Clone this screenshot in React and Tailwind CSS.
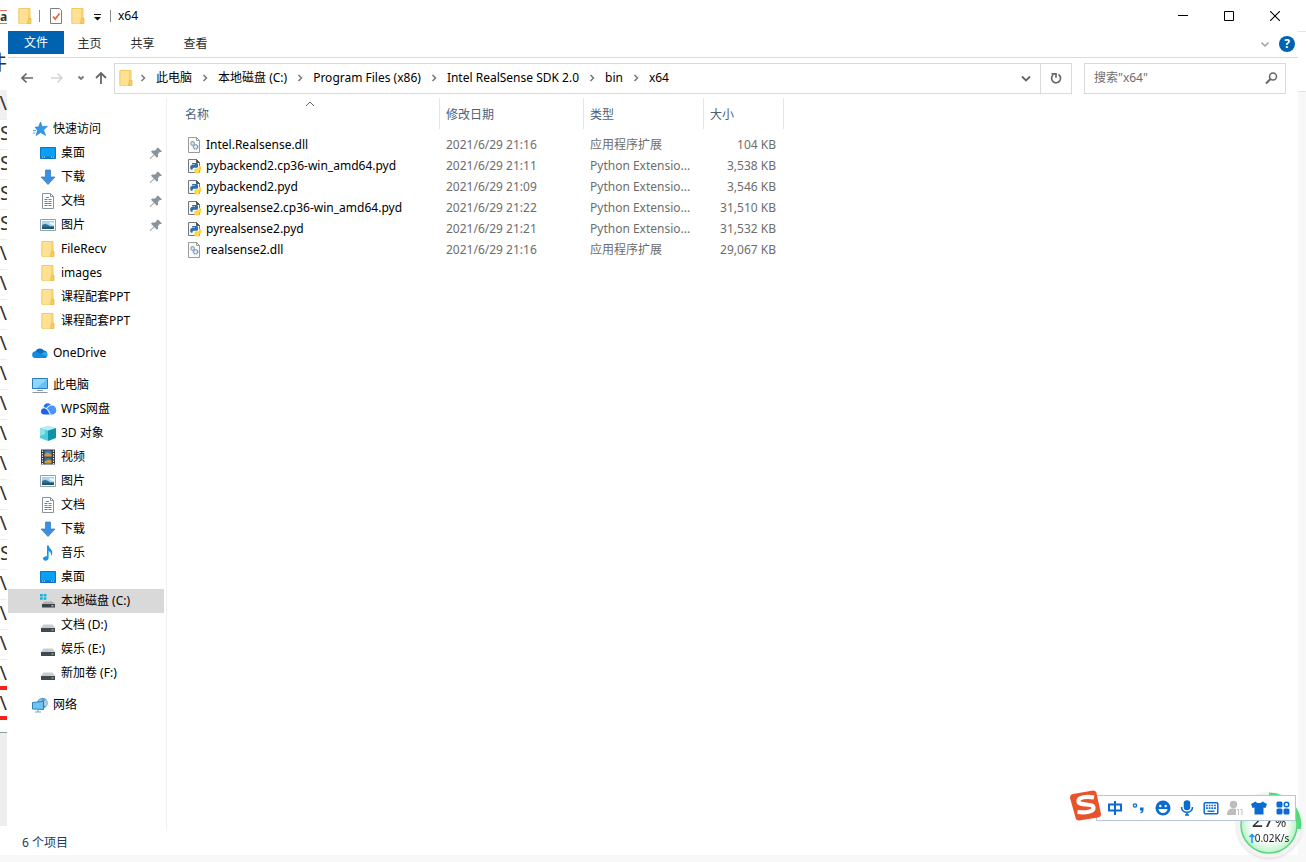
import React from "react";

const QUICK = [
  { icon: "desktop", label: "桌面", pinned: true },
  { icon: "download", label: "下载", pinned: true },
  { icon: "doc", label: "文档", pinned: true },
  { icon: "picture", label: "图片", pinned: true },
  { icon: "folder", label: "FileRecv" },
  { icon: "folder", label: "images" },
  { icon: "folder", label: "课程配套PPT" },
  { icon: "folder", label: "课程配套PPT" },
];

const THIS_PC = [
  { icon: "wps", label: "WPS网盘" },
  { icon: "cube", label: "3D 对象" },
  { icon: "video", label: "视频" },
  { icon: "picture", label: "图片" },
  { icon: "doc", label: "文档" },
  { icon: "download", label: "下载" },
  { icon: "music", label: "音乐" },
  { icon: "desktop", label: "桌面" },
  { icon: "sysdrive", label: "本地磁盘 (C:)", selected: true },
  { icon: "drive", label: "文档 (D:)" },
  { icon: "drive", label: "娱乐 (E:)" },
  { icon: "drive", label: "新加卷 (F:)" },
];

const CRUMBS = ["此电脑", "本地磁盘 (C:)", "Program Files (x86)", "Intel RealSense SDK 2.0", "bin", "x64"];

const PYD = "Python Extensio...";
const DLL = "应用程序扩展";

const FILES = [
  { name: "Intel.Realsense.dll", date: "2021/6/29 21:16", type: DLL, size: "104 KB" },
  { name: "pybackend2.cp36-win_amd64.pyd", date: "2021/6/29 21:11", type: PYD, size: "3,538 KB" },
  { name: "pybackend2.pyd", date: "2021/6/29 21:09", type: PYD, size: "3,546 KB" },
  { name: "pyrealsense2.cp36-win_amd64.pyd", date: "2021/6/29 21:22", type: PYD, size: "31,510 KB" },
  { name: "pyrealsense2.pyd", date: "2021/6/29 21:21", type: PYD, size: "31,532 KB" },
  { name: "realsense2.dll", date: "2021/6/29 21:16", type: DLL, size: "29,067 KB" },
];

// Paths listed in the window behind; only the last few pixels show.
const BEHIND = [":\\", "S", "S", "S", "S", ":\\", ":\\", ":\\", ":\\", ":\\", ":\\", ":\\", ":\\", ":\\", ":\\", "S", ":\\", ":\\", ":\\", ":\\", ":\\"];

const GLYPHS = {
  folder: (
    <>
      <path d="M2 15.500V.5h11v11" fill="#ffe08a" stroke="#efc75e" />
      <path d="M2 15.500V.5h9.500v15z" fill="#ffe191" stroke="#efc55a" strokeWidth=".6" />
      <path d="M11.500 10.500h2.500v5h-3.500z" fill="#f7cf62" stroke="#e5b847" strokeWidth=".8" />
    </>
  ),
  star: (
    <>
      <path d="M8.500 1l1.700 4.700 5.300-.4-4 3.600 2.100 5.600-4.900-3-4.600 3.100 1.500-5.400L3 6.300l3.700-.5z" fill="#2f9be8" stroke="#1479c9" strokeWidth=".6" />
      <path d="M1 9.500h3M1 12h2" stroke="#4aa9ee" strokeWidth="1" />
    </>
  ),
  desktop: (
    <>
      <path d="M.5 2.500h15v11H.5z" fill="#0aa0f6" stroke="#0d76c2" />
      <path d="M1 11h14v2H1z" fill="#0b83d6" />
      <path d="M2 12h1m1 0h1m6 0h1m1 0h1" stroke="#d7f0ff" strokeWidth=".9" />
    </>
  ),
  download: <path d="M5.500 1h5v7H15l-7 7.500L1 8h4.500z" fill="#3e8fe0" stroke="#2c76c4" strokeWidth=".7" />,
  doc: (
    <>
      <path d="M2.500.5h8l3 3v12h-11z" fill="#fff" stroke="#8a949c" />
      <path d="M10.500.5v3h3" fill="none" stroke="#8a949c" />
      <path d="M6 4.500h3M4.500 6.500h3m1 0h3M4.500 8.500h3m1 0h3M4.500 10.500h7M4.500 12.500h3m1 0h3" stroke="#2f8fd0" strokeWidth="1.200" />
    </>
  ),
  picture: (
    <>
      <path d="M.5 2.500h15v11H.5z" fill="#fff" stroke="#98a1a8" />
      <path d="M2 4h12v8H2z" fill="#a9d5f3" />
      <path d="M2 8c3-2 5-1 7 .500s4 .5 5 .5v3H2z" fill="#33708f" />
      <path d="M2 10h12v2H2z" fill="#1d5675" />
      <path d="M9 6c2-1 4 0 5 0v2c-2 0-3-.5-5-2z" fill="#eef8fe" />
    </>
  ),
  cloud: (
    <>
      <path d="M4 12.800A3.300 3.300 0 0 1 3.500 6.300a4.800 4.800 0 0 1 8.300-.8A3.800 3.800 0 0 1 13 12.800z" fill="#0f6cbd" />
      <path d="M3.500 13a3.300 3.300 0 0 1-.1-6.600c1.600 0 2.500.6 4 1.600L14.800 12a2 2 0 0 1-1.800 1z" fill="#168ade" />
      <path d="M9 9l3.500-2.200a3.200 3.200 0 0 1 2.600 4.800z" fill="#2ba6f2" />
    </>
  ),
  pc: (
    <>
      <path d="M.5 1.500h15v10H.5z" fill="#66c0f5" stroke="#2a7db6" />
      <path d="M1 2h14L5 11H1z" fill="#8fd6fb" />
      <path d="M5 13.500h6" stroke="#8c989f" />
      <path d="M.5 15.500h15" stroke="#8c989f" />
    </>
  ),
  wps: (
    <>
      <path d="M8 6.500a4 4 0 0 1 4-2 4.600 4.600 0 0 1 1 9H10L6.500 8z" fill="#4a95ff" />
      <path d="M3.500 6C4 2 8.500 1 11 4 8.500 4 7.500 5.500 6.500 7z" fill="#2473f0" />
      <path d="M3.500 13.500a3.200 3.200 0 0 1 .3-6.300c2 0 3 1.200 3.600 2.300l2.400 4z" fill="#1f63df" />
      <path d="M6.500 7.300c1.500 1 2.500 3 3.800 6" fill="none" stroke="#fff" strokeWidth=".9" />
    </>
  ),
  cube: (
    <>
      <path d="M0 3l8-2.500L16 3 8 5.500z" fill="#b7eef5" />
      <path d="M0 3l8 2.500V16L0 13z" fill="#4fcbdc" />
      <path d="M16 3L8 5.500V16l8-3z" fill="#0e93a8" />
      <path d="M0 3l5 1.500V9L0 11z" fill="#89e2ec" />
    </>
  ),
  video: (
    <>
      <path d="M1 .5h14v15H1z" fill="#33383d" />
      <path d="M4.500 1.500h7v6h-7z" fill="#477cb8" />
      <path d="M4.500 8.500h7v6h-7z" fill="#3b6ca6" />
      <path d="M4.500 5.500l3-2 4 2v2h-7zM4.500 12.500l4-2 3 1v3h-7z" fill="#cf9e39" />
      <path d="M2.500 1.500v14M13.500 1.500v14" stroke="#fff" strokeWidth="1.200" strokeDasharray="1.200 1.300" />
    </>
  ),
  music: (
    <path d="M7 .5h1.600c.5 3 4 4 3.700 7.500-.1 1.500-.8 2.500-1.300 3 .6-3-.7-4.300-2.400-5V13c0 1.800-1.500 2.700-3 2.700S3 14.700 3 13.500 4.300 11 7 11.200z" fill="#1695e0" />
  ),
  drive: (
    <>
      <path d="M3.500 7.500h9l2.500 3.500H1z" fill="#c9cccf" />
      <path d="M1 11h14v4H1z" fill="#41484e" />
      <path d="M11.500 13h2" stroke="#9be8a4" />
    </>
  ),
  sysdrive: (
    <>
      <path d="M0 1h2.800v2.500H0zM3.600 1h2.800v2.500H3.600zM0 4.300h2.800v2.500H0zM3.600 4.300h2.800v2.500H3.600z" fill="#17b4da" />
      <path d="M4.500 8.500h8L15 11H2z" fill="#aeb2b5" />
      <path d="M2 11h13v3.500H2z" fill="#3d454b" />
      <path d="M11.500 12.800h2" stroke="#d9f5dc" />
    </>
  ),
  network: (
    <>
      <circle cx="10.500" cy="6" r="5.300" fill="#5c9fcb" />
      <path d="M6.500 3.500c3-2.500 3 1 5 1s1-3 3-1 1 5-1 6z" fill="#a9cbe0" />
      <path d="M.5 5.500l11-1.200v8.200l-11-.5z" fill="#6cc3f4" stroke="#2374ae" strokeWidth=".9" />
      <path d="M3 15h6M6 12.500V15" stroke="#77a9ca" strokeWidth="1.200" />
    </>
  ),
  dll: (
    <>
      <path d="M1.500.5h8l3 3v12h-11z" fill="#fbfbfb" stroke="#9a9a9a" />
      <path d="M9.500.5v3h3" fill="none" stroke="#9a9a9a" />
      <circle cx="5.600" cy="6.500" r="1.800" fill="#e3e9f0" stroke="#90a4bb" strokeWidth="1.200" />
      <circle cx="8.600" cy="9.800" r="2.200" fill="#e3e9f0" stroke="#8096b0" strokeWidth="1.400" strokeDasharray="1.400 .4" />
    </>
  ),
  pyd: (
    <>
      <path d="M1.500 1.500h8l3 3v10h-11z" fill="#f7f7f7" stroke="#777" />
      <path d="M9.500 1.500v3h3z" fill="#555" stroke="#555" />
      <path d="M6 5h3.500c1 0 1.500.6 1.500 1.500v2c0 .8-.6 1.300-1.500 1.300H7c-1 0-1.500.6-1.500 1.500v.5H5c-1.300 0-1.800-1-1.800-2.400S3.700 7 5 7h3v-.4H5V6c0-.6.3-1 1-1z" fill="#2f6ea8" />
      <path d="M12 8h.700c1.300 0 1.800 1 1.800 2.400S14 12.800 12.700 12.800H10v.5h2.700v.9c0 .8-.9 1.300-2.500 1.300s-2.700-.5-2.700-1.300V12c0-1 .6-1.500 1.500-1.500h1.500c1 0 1.500-.6 1.500-1.500z" fill="#ffd437" />
    </>
  ),
  check: (
    <>
      <path d="M2.500.5h9l2 2v13h-11z" fill="#fff" stroke="#7d7d7d" />
      <path d="M5 8.500l2.200 2.500L11.500 5.500" fill="none" stroke="#e06a3c" strokeWidth="1.800" />
    </>
  ),
  pin: (
    <path d="M10 2.500l4 4-1.300.6-.9-.2-1.800 2 .1 2.800-1.300 1L6.300 10l-3.800 3.700-.7.200.2-.8L5.800 9.400 3 6.700l1-1.200 2.900.1 2-1.900-.2-.7z" fill="#8a949c" />
  ),
};

function Icon({ name, className = "size-4" }) {
  return (
    <svg viewBox="0 0 16 16" aria-hidden="true" className={`shrink-0 overflow-visible ${className}`}>
      {GLYPHS[name]}
    </svg>
  );
}

function Stroke({ d, className, width = 1.5 }) {
  return (
    <svg viewBox="0 0 16 16" aria-hidden="true" className={`size-4 shrink-0 ${className}`} fill="none" stroke="currentColor" strokeWidth={width}>
      <path d={d} />
    </svg>
  );
}

function TitleBar() {
  return (
    <header className="flex h-[31px] items-center pl-[9px]">
      <Icon name="folder" />
      <span className="ml-1.5 h-3 w-px bg-[#8a8a8a]" />
      <button aria-label="属性" className="ml-2"><Icon name="check" /></button>
      <button aria-label="新建文件夹" className="ml-1.5"><Icon name="folder" /></button>
      <button aria-label="自定义快速访问工具栏" className="ml-1">
        <svg viewBox="0 0 16 16" className="size-4"><path d="M4 6h7v1H4zM4 9h7l-3.500 3.500z" fill="#111" /></svg>
      </button>
      <span className="ml-1 h-3 w-px bg-[#8a8a8a]" />
      <h1 className="ml-[7px] flex-1 text-xs">x64</h1>
      <button aria-label="最小化" className="flex h-full w-[46px] items-center justify-center">
        <svg viewBox="0 0 10 10" className="size-[10px]"><path d="M0 4.500h10" stroke="#000" /></svg>
      </button>
      <button aria-label="最大化" className="flex h-full w-[46px] items-center justify-center">
        <svg viewBox="0 0 10 10" className="size-[10px]"><path d="M.5.5h9v9h-9z" fill="none" stroke="#000" /></svg>
      </button>
      <button aria-label="关闭" className="flex h-full w-[46px] items-center justify-center">
        <svg viewBox="0 0 10 10" className="size-[10px]"><path d="M0 0l10 10M10 0L0 10" stroke="#000" strokeWidth="1.100" /></svg>
      </button>
    </header>
  );
}

function Ribbon() {
  return (
    <div className="flex h-[27px] border-b border-[#dadbdc] text-xs text-[#2b2b2b]">
      <button className="h-[23px] w-14 bg-[#0063b1] text-white">文件</button>
      {["主页", "共享", "查看"].map((t) => (
        <button key={t} className="h-[25px] w-[53px] pr-0.5">{t}</button>
      ))}
      <div className="ml-auto flex h-[26px] items-center gap-[6px] pr-[3px]">
        <button aria-label="展开功能区"><Stroke d="M4.500 6.500L8 10l3.500-3.500" className="text-[#9aa0a6]" /></button>
        <button aria-label="帮助" className="size-4 rounded-full bg-[#0063b1] text-xs leading-4 font-bold text-white">?</button>
      </div>
    </div>
  );
}

function AddressRow() {
  return (
    <div className="flex h-10 items-center pr-3 pl-[11px]">
      <button aria-label="后退"><Stroke d="M14 8H2.500M7.500 3.500L3 8l4.500 4.500" className="text-[#666]" width={1.7} /></button>
      <button aria-label="前进" className="ml-[14px]"><Stroke d="M2 8h11.500M8.500 3.500L13 8l-4.500 4.500" className="text-[#d4d4d4]" /></button>
      <button aria-label="最近浏览的位置" className="ml-2"><Stroke d="M5.500 6.500L8 9l2.500-2.500" className="text-[#777]" width={1.8} /></button>
      <button aria-label="上移" className="ml-1"><Stroke d="M8 14V3M3 8l5-5 5 5" className="text-[#666]" width={1.8} /></button>
      <div className="ml-[5px] flex h-[31px] flex-1 items-center border border-[#d9d9d9] pl-[3px]">
        <Icon name="folder" />
        <nav aria-label="路径" className="flex flex-1 text-xs text-black">
          {CRUMBS.map((c, i) => (
            <span key={c} className="flex items-center">
              <Stroke d="M6.500 5L9.500 8l-3 3" className={i ? "mx-[5px] text-[#777]" : "ml-px mr-[5px] text-[#777]"} />
              <button className="leading-5 whitespace-nowrap">{c}</button>
            </span>
          ))}
        </nav>
        <button aria-label="以前的位置" className="mr-1.5"><Stroke d="M4 6.500l4 4 4-4" className="text-[#666]" width={1.8} /></button>
        <button aria-label="刷新" className="flex h-full w-[31px] items-center justify-center border-l border-[#d9d9d9]">
          <Stroke d="M10.500 4.500A4.500 4.500 0 1 1 5 5M3.500 3.800H8v4" className="text-[#666]" width={1.7} />
        </button>
      </div>
      <label className="ml-3 flex h-[31px] w-[202px] items-center border border-[#d9d9d9] pr-1.5 pl-[9px]">
        <input type="search" aria-label="搜索x64" placeholder={'搜索"x64"'} className="w-0 flex-1 text-xs outline-none placeholder:text-[#6d6d6d]" />
        <svg viewBox="0 0 16 16" className="size-4" fill="none" stroke="#666" strokeWidth="1.500">
          <circle cx="10" cy="6.500" r="3.500" />
          <path d="M7.500 9L3 13.500" strokeWidth="2" />
        </svg>
      </label>
    </div>
  );
}

function NavItem({ icon, label, pinned, selected, root }) {
  return (
    <a
      href="#"
      className={`flex h-6 items-center gap-[5px] text-xs text-black ${root ? "pl-6" : "pl-8"} ${selected ? "bg-[#d9d9d9]" : ""}`}>
      <Icon name={icon} />
      <span className="flex-1 whitespace-nowrap">{label}</span>
      {pinned && <Icon name="pin" />}
    </a>
  );
}

function Sidebar() {
  return (
    <nav aria-label="导航窗格" className="flex w-[159px] shrink-0 flex-col gap-2 border-r border-[#f0f0f0] pt-[19px] pr-0.5">
      <div>
        <NavItem root icon="star" label="快速访问" />
        {QUICK.map((it, i) => <NavItem key={i} {...it} />)}
      </div>
      <NavItem root icon="cloud" label="OneDrive" />
      <div>
        <NavItem root icon="pc" label="此电脑" />
        {THIS_PC.map((it) => <NavItem key={it.label} {...it} />)}
      </div>
      <NavItem root icon="network" label="网络" />
    </nav>
  );
}

function FileTable() {
  const th = "border-r border-[#e5e5e5] p-0 pt-0.5 pl-1.5 text-left font-normal";
  return (
    <main className="min-w-0 flex-1">
      <table className="w-[617px] table-fixed border-separate border-spacing-0 text-xs">
        <colgroup>
          <col className="w-[273px]" />
          <col className="w-36" />
          <col className="w-[120px]" />
          <col className="w-20" />
        </colgroup>
        <thead className="text-[#4c607a]">
          <tr className="h-[31px]">
            <th className="relative border-r border-[#e5e5e5] p-0 pt-0.5 pl-[18px] text-left font-normal">
              名称
              <svg viewBox="0 0 10 6" className="absolute top-[3px] left-[138px] h-[6px] w-[10px]" fill="none" stroke="#666">
                <path d="M1 5l4-4 4 4" />
              </svg>
            </th>
            <th className={th}>修改日期</th>
            <th className={th}>类型</th>
            <th className={th}>大小</th>
          </tr>
        </thead>
        <tbody className="text-[#6d6d6d] before:block before:h-[5px]">
          {FILES.map((f) => (
            <tr key={f.name} className="h-[21px]">
              <td className="p-0 pl-5 text-black">
                <span className="flex items-center gap-[3px] whitespace-nowrap">
                  <Icon name={f.type === DLL ? "dll" : "pyd"} />
                  {f.name}
                </span>
              </td>
              <td className="p-0 pl-1.5">{f.date}</td>
              <td className="p-0 pl-1.5 whitespace-nowrap">{f.type}</td>
              <td className="p-0 pr-2 text-right">{f.size}</td>
            </tr>
          ))}
        </tbody>
      </table>
    </main>
  );
}

function BehindLeft() {
  return (
    <div aria-hidden="true" className="flex w-[7px] shrink-0 flex-col overflow-hidden bg-white text-xl text-[#333]">
      <div className="mt-[10px] h-[14px] border-y border-[#e0705a] text-xs leading-3 font-bold">a</div>
      <div className="mt-[25px] flex h-7 items-center justify-end">件</div>
      <div className="mt-[13px]">
        {BEHIND.map((t, i) => (
          <div
            key={i}
            className={`flex h-[30px] items-start border-b border-[#ececec] leading-[26px] ${t === "S" ? "" : "justify-end"} ${i === 0 ? "bg-[#f0f0f0]" : ""} ${i > 18 ? "border-b-4 border-b-[#f5221b]" : ""}`}>
            {t}
          </div>
        ))}
      </div>
      <div className="mt-3 h-[94px] border-t border-[#8fa39a] bg-[#eee]" />
    </div>
  );
}

function ImeBar() {
  const btn = "flex size-6 items-center justify-center";
  return (
    <div className="fixed right-[10px] bottom-[41px] z-20 flex items-end">
      <svg viewBox="0 0 32 32" className="z-10 -mr-1.5 size-8" role="img" aria-label="S">
        <path d="M3 5l20-3.500q3 0 3.500 2.500L31 25q0 3-3 3.500L9 31.500q-3 0-3.500-3L0 9q0-3.500 3-4z" fill="#e9532b" />
        <path d="M24 8.500C17 7 8 8 8.500 12.500c.5 4.500 14.500 1.500 15 6 .4 4.500-8 5.500-16 4.500" fill="none" stroke="#fff" strokeWidth="4.200" />
      </svg>
      <div className="flex h-[26px] w-[200px] items-center border border-[#b4c6d8] bg-white pl-1.5 text-[#0a6cd0]">
        <button aria-label="中文" className={btn}>
          <svg viewBox="0 0 16 16" className="size-4" fill="none" stroke="currentColor" strokeWidth="2"><path d="M2 4.500h12v6H2zM8 1v14" /></svg>
        </button>
        <button aria-label="标点" className={btn}>
          <svg viewBox="0 0 16 16" className="size-4"><circle cx="4" cy="5.500" r="1.600" fill="none" stroke="currentColor" strokeWidth="1.400" /><path d="M9 7.500h3.500V10c0 2-1 3-3 3.500V12c1-.3 1.400-.8 1.400-1.500H9z" fill="currentColor" /></svg>
        </button>
        <button aria-label="表情" className={btn}>
          <svg viewBox="0 0 16 16" className="size-4"><circle cx="8" cy="8" r="7.500" fill="currentColor" /><circle cx="5.300" cy="6" r="1.200" fill="#fff" /><circle cx="10.700" cy="6" r="1.200" fill="#fff" /><path d="M3.500 9h9a4.500 4 0 0 1-9 0z" fill="#fff" /></svg>
        </button>
        <button aria-label="语音" className={btn}>
          <svg viewBox="0 0 16 16" className="size-4" fill="none" stroke="currentColor" strokeWidth="1.600"><rect x="5.500" y="1" width="5" height="8.500" rx="2.500" fill="currentColor" /><path d="M2.500 7c0 7 11 7 11 0M8 12v3M6 15h4" /></svg>
        </button>
        <button aria-label="软键盘" className={btn}>
          <svg viewBox="0 0 16 16" className="size-4"><rect x="1.200" y="2.700" width="13.600" height="11" rx="1" fill="#fff" stroke="currentColor" strokeWidth="1.500" /><path d="M3 5.500h10M3 8.200h10" stroke="currentColor" strokeWidth="1.700" strokeDasharray="1.800 .9" /><path d="M4.500 11.200h7" stroke="currentColor" strokeWidth="1.400" /></svg>
        </button>
        <button aria-label="用户" className={`${btn} text-[#bdbdbd]`}>
          <svg viewBox="0 0 16 16" className="size-4" fill="currentColor"><circle cx="6.500" cy="4.500" r="3.700" /><path d="M0 15c0-5 2-6.500 6.500-6.500 1.300 0 2 .2 2.500.5v6z" /><path d="M10 9.500h1.500V15M13.500 9.500H15V15" fill="none" stroke="currentColor" /></svg>
        </button>
        <button aria-label="皮肤" className={btn}>
          <svg viewBox="0 0 16 16" className="size-4" fill="currentColor"><path d="M4.500 1.500c1.500 2 5.500 2 7 0L16 4l-1.500 4-2-.5v7h-9v-7l-2 .5L0 4z" /></svg>
        </button>
        <button aria-label="工具箱" className={btn}>
          <svg viewBox="0 0 16 16" className="size-4" fill="currentColor"><rect x="1.500" y="1.500" width="6" height="6" rx="1.500" /><rect x="1.500" y="8.500" width="6" height="6" rx="1.500" /><rect x="8.500" y="8.500" width="6" height="6" rx="1.500" /><circle cx="11.500" cy="4.500" r="2.300" fill="none" stroke="currentColor" strokeWidth="1.500" /></svg>
        </button>
      </div>
    </div>
  );
}

function SpeedBall() {
  return (
    <div className="fixed right-1 bottom-1 z-10 flex size-[66px] flex-col items-center rounded-full bg-[#f3f3f3] pt-[18px] shadow">
      <svg viewBox="0 0 66 66" className="absolute inset-0">
        <defs>
          <radialGradient id="ball">
            <stop offset="0.6" stopColor="#fff" />
            <stop offset="1" stopColor="#b9f2c8" />
          </radialGradient>
        </defs>
        <circle cx="33" cy="33" r="28" fill="url(#ball)" stroke="#56d67f" strokeWidth="1.500" />
        <path d="M33 2.500A30.500 30.500 0 0 1 63 37" fill="none" stroke="#4fdc7c" strokeWidth="4" />
      </svg>
      <span className="relative text-xl leading-5 text-[#333]">27<span className="text-sm">%</span></span>
      <span className="relative flex items-center text-[10px] leading-3 whitespace-nowrap text-[#222]">
        <svg viewBox="0 0 6 10" className="h-[10px] w-1.5" fill="none" stroke="#1e90ff" strokeWidth="1.500">
          <path d="M3 10V2M.5 4L3 1.500 5.500 4" />
        </svg>
        0.02K/s
      </span>
    </div>
  );
}

export default function App() {
  return (
    <div className="flex min-h-screen flex-col bg-[#f8f8f8] font-['Noto_Sans','Noto_Sans_CJK_SC',sans-serif]">
      <div className="flex flex-1">
        <BehindLeft />
        <div className="flex min-w-0 flex-1 flex-col bg-white pl-px">
          <TitleBar />
          <Ribbon />
          <AddressRow />
          <div className="flex flex-1">
            <Sidebar />
            <FileTable />
          </div>
          <footer className="flex h-6 items-center pl-[14px] text-xs text-[#1e395b]">6 个项目</footer>
        </div>
        <div aria-hidden="true" className="w-2 shrink-0">
          <div className="h-[92px] border-b border-[#e4e4e4] bg-white pt-[31px]">
            <div className="border-t border-[#e4e4e4]" />
          </div>
        </div>
      </div>
      <div aria-hidden="true" className="h-[7px] bg-[#f8f8f8]" />
      <SpeedBall />
      <ImeBar />
    </div>
  );
}
